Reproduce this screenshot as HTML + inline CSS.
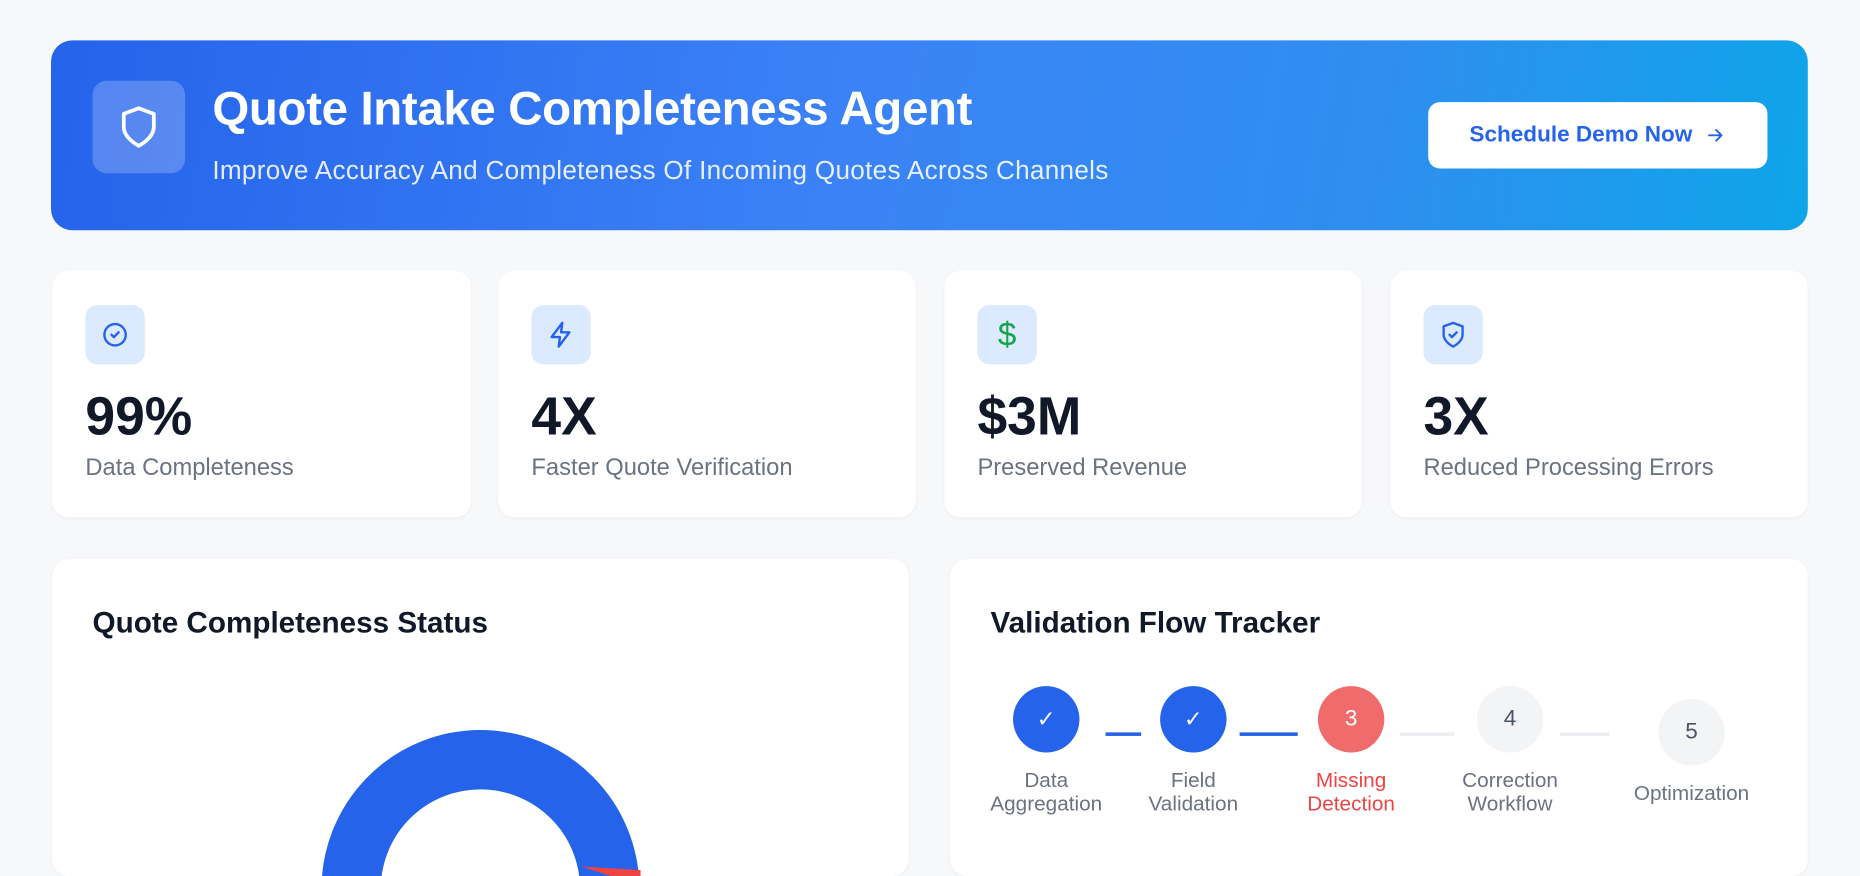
<!DOCTYPE html>
<html><head><meta charset="utf-8"><style>
*{margin:0;padding:0;box-sizing:border-box}
html,body{width:1860px;height:876px;overflow:hidden;background:#f7f8fa;font-family:"Liberation Sans",Arial,sans-serif}
#w{position:absolute;left:0;top:0;width:1568px;height:738px;overflow:hidden;transform-origin:0 0;transform:scale(1.18622,1.18699)}
.a{position:absolute}
.banner{left:43px;top:34px;width:1481px;height:160px;border-radius:18px;background:linear-gradient(100deg,#2563eb 0%,#3b82f6 45%,#2f8ef0 75%,#0ea5e9 100%)}
.card{background:#fff;border-radius:14px;box-shadow:0 1px 3px rgba(0,0,0,.04)}
.ib{left:28px;top:29px;width:50px;height:50px;border-radius:10px;background:#dbeafe;display:flex;align-items:center;justify-content:center}
.val{left:28px;top:97px;font-size:45px;font-weight:700;color:#111827}
.lab{left:28px;top:155px;font-size:20px;color:#6b7280}
.ct{font-size:25px;font-weight:700;color:#111827}
.c{position:absolute;width:56px;height:56px;border-radius:50%;display:flex;align-items:center;justify-content:center;font-size:19px;color:#fff}
.ln{position:absolute;height:3px;top:617px}
.sl{position:absolute;font-size:17.5px;color:#6b7280;text-align:center;line-height:20px;width:140px}
</style></head><body><div id="w">
<div class="a banner">
 <div class="a" style="left:35px;top:34px;width:78px;height:78px;border-radius:12px;background:rgba(255,255,255,.22);display:flex;align-items:center;justify-content:center">
  <svg width="38" height="38" viewBox="0 0 24 24" fill="none" stroke="#fff" stroke-width="2" stroke-linecap="round" stroke-linejoin="round"><path d="M12 22s8-4 8-10V5l-8-3-8 3v7c0 6 8 10 8 10z"/></svg></div>
 <div class="a" style="left:136px;top:36px;font-size:40px;font-weight:700;color:#fff;letter-spacing:-0.3px">Quote Intake Completeness Agent</div>
 <div class="a" style="left:136px;top:97px;font-size:22px;letter-spacing:0.25px;color:rgba(255,255,255,.88)">Improve Accuracy And Completeness Of Incoming Quotes Across Channels</div>
 <div class="a" style="left:1161px;top:52px;width:286px;height:56px;border-radius:10px;background:#fff;color:#2563eb;font-size:19px;font-weight:700;display:flex;align-items:center;justify-content:center">Schedule Demo Now&nbsp;&nbsp;<svg width="18" height="18" viewBox="0 0 24 24" fill="none" stroke="#2563eb" stroke-width="2.2" stroke-linecap="round" stroke-linejoin="round"><path d="M5 12h14M13 6l6 6-6 6"/></svg></div>
</div>

<div class="a card" style="left:44px;top:228px;width:353px;height:208px">
 <div class="a ib"><svg width="24" height="24" viewBox="0 0 24 24" fill="none" stroke="#2563eb" stroke-width="2" stroke-linecap="round" stroke-linejoin="round"><circle cx="12" cy="12" r="9"/><path d="M9 12l2 2 4-4"/></svg></div>
 <div class="a val">99%</div><div class="a lab">Data Completeness</div></div>
<div class="a card" style="left:420px;top:228px;width:352px;height:208px">
 <div class="a ib"><svg width="24" height="24" viewBox="0 0 24 24" fill="none" stroke="#2563eb" stroke-width="2" stroke-linecap="round" stroke-linejoin="round"><path d="M13 2L4 14h7l-1 8 9-12h-7l1-8z"/></svg></div>
 <div class="a val">4X</div><div class="a lab">Faster Quote Verification</div></div>
<div class="a card" style="left:796px;top:228px;width:352px;height:208px">
 <div class="a ib"><span style="color:#16a34a;font-size:28px;font-weight:400">$</span></div>
 <div class="a val">$3M</div><div class="a lab">Preserved Revenue</div></div>
<div class="a card" style="left:1172px;top:228px;width:352px;height:208px">
 <div class="a ib"><svg width="24" height="24" viewBox="0 0 24 24" fill="none" stroke="#2563eb" stroke-width="2" stroke-linecap="round" stroke-linejoin="round"><path d="M12 22s8-4 8-10V5l-8-3-8 3v7c0 6 8 10 8 10z"/><path d="M9 12l2 2 4-4"/></svg></div>
 <div class="a val">3X</div><div class="a lab">Reduced Processing Errors</div></div>

<div class="a card" style="left:44px;top:471px;width:722px;height:267px;overflow:hidden">
 <div class="a ct" style="left:34px;top:40px">Quote Completeness Status</div>
 <svg class="a" style="left:0;top:0" width="722" height="267"><circle cx="361" cy="278" r="109" fill="none" stroke="#2563eb" stroke-width="50"/><path d="M446 259 L496 262 L496 275 Z" fill="#ef4444"/></svg>
</div>
<div class="a card" style="left:801px;top:471px;width:723px;height:267px">
 <div class="a ct" style="left:34px;top:40px">Validation Flow Tracker</div>
</div>
<div class="ln" style="left:932px;width:30px;background:#2563eb"></div>
<div class="ln" style="left:1045px;width:49px;background:#2563eb"></div>
<div class="ln" style="left:1180px;width:46px;background:#eceef1"></div>
<div class="ln" style="left:1315px;width:42px;background:#eceef1"></div>
<div class="c" style="left:854px;top:578px;background:#2563eb">✓</div>
<div class="c" style="left:978px;top:578px;background:#2563eb">✓</div>
<div class="c" style="left:1111px;top:578px;background:#f06b6b">3</div>
<div class="c" style="left:1245px;top:578px;background:#f3f4f6;color:#4b5563">4</div>
<div class="c" style="left:1398px;top:589px;background:#f3f4f6;color:#4b5563">5</div>
<div class="sl" style="left:812px;top:647px">Data<br>Aggregation</div>
<div class="sl" style="left:936px;top:647px">Field<br>Validation</div>
<div class="sl" style="left:1069px;top:647px;color:#ef4444">Missing<br>Detection</div>
<div class="sl" style="left:1203px;top:647px">Correction<br>Workflow</div>
<div class="sl" style="left:1356px;top:658px">Optimization</div>
</div></body></html>
